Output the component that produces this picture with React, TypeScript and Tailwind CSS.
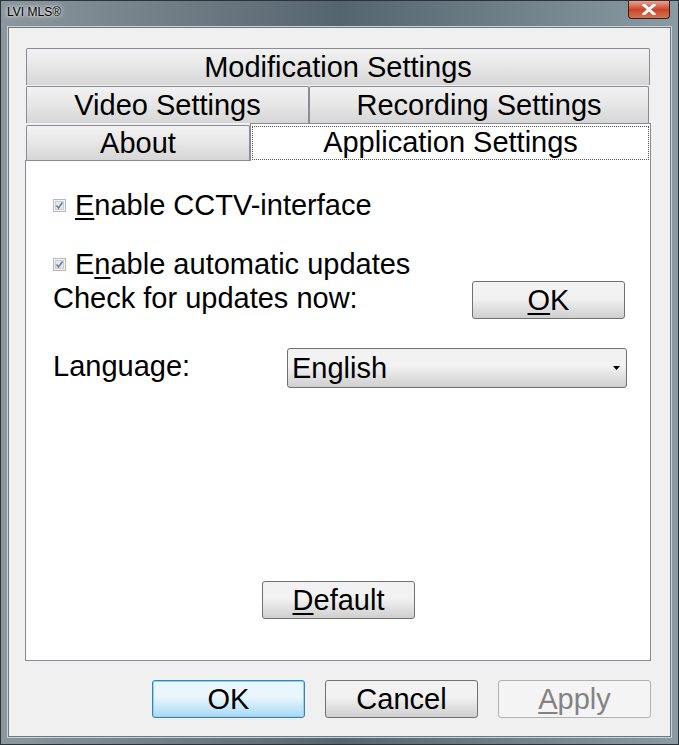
import React from 'react';

const font = { fontFamily: '"Liberation Sans", Arial, sans-serif' };

const Tab: React.FC<{ label: string; className: string }> = ({ label, className }) => (
  <div
    className={`flex items-center justify-center rounded-t-[2px] border border-b-0 border-[#898c95] bg-gradient-to-b from-[#f2f2f2] via-[#e6e6e6] to-[#d6d6d6] text-[29px] leading-none text-black ${className}`}
  >
    {label}
  </div>
);

const Check: React.FC = () => (
  <svg width="13" height="13" viewBox="0 0 13 13" className="shrink-0">
    <rect x="0.5" y="0.5" width="12" height="12" fill="#f4f4f4" stroke="#b5b8bc" />
    <rect x="2.5" y="2.5" width="8" height="8" fill="#e3e6ea" stroke="#c8ccd2" />
    <path d="M3.5 6.5 L5.5 9 L9.5 3.5" fill="none" stroke="#6d7f9b" strokeWidth="1.6" />
  </svg>
);

const Button: React.FC<{ children: React.ReactNode; variant?: 'normal' | 'default' | 'disabled'; className?: string }> = ({
  children,
  variant = 'normal',
  className = '',
}) => {
  const styles = {
    normal: 'border-[#707070] bg-gradient-to-b from-[#f2f2f2] from-45% to-[#cfcfcf] text-black',
    default: 'border-[#3c7fb1] bg-gradient-to-b from-[#eaf6fd] from-45% to-[#a7d9f5] text-black shadow-[inset_0_0_0_1px_#8ed4f5]',
    disabled: 'border-[#adb2b5] bg-[#f4f4f4] text-[#838383]',
  }[variant];
  return (
    <div
      className={`flex h-[38px] w-[153px] items-center justify-center rounded-[3px] border text-[29px] leading-none ${styles} ${className}`}
    >
      {children}
    </div>
  );
};

export default function App() {
  return (
    <div
      style={font}
      className="flex h-[745px] w-[679px] flex-col overflow-hidden border border-[#2c3338] bg-gradient-to-r from-[#8c979d] via-[#55656f] to-[#8a9ba3]"
    >
      {/* title bar */}
      <div className="flex h-[26px] shrink-0 items-start justify-between">
        <span className="ml-[6px] mt-[5px] text-[12px] leading-none text-black [text-shadow:0_0_6px_#ffffff,0_0_3px_#ffffff]">
          LVI MLS®
        </span>
        <div className="mr-[8px] flex h-[18px] w-[42px] items-center justify-center rounded-b-[4px] border border-t-0 border-[#4a1a14] bg-gradient-to-b from-[#e8a393] via-[#c8452c] to-[#d8724f]">
          <svg width="14" height="11" viewBox="0 0 14 11">
            <path d="M2 1 L12 10 M12 1 L2 10" stroke="#ffffff" strokeWidth="3" strokeLinecap="square" />
          </svg>
        </div>
      </div>

      {/* client area */}
      <div className="mx-[7px] mb-[7px] flex flex-1 flex-col border border-[#6d7880] bg-[#f0f0f0] shadow-[0_0_0_1px_#c7d3d9]">
        {/* tab control */}
        <div className="ml-[16px] mt-[20px] flex w-[626px] flex-col">
          <Tab label="Modification Settings" className="ml-[1px] h-[37px] w-[624px]" />
          <div className="mt-[1px] flex">
            <Tab label="Video Settings" className="ml-[1px] h-[37px] w-[283px]" />
            <Tab label="Recording Settings" className="h-[37px] w-[340px]" />
          </div>
          <div className="flex items-end">
            <Tab label="About" className="ml-[1px] h-[35px] w-[224px]" />
            <div className="relative z-10 -mb-[1px] flex h-[38px] w-[401px] items-center justify-center border border-b-0 border-[#898c95] bg-white text-[29px] leading-none">
              <div className="flex h-[34px] w-[397px] items-center justify-center border border-dotted border-[#555]">
                Application Settings
              </div>
            </div>
          </div>

          {/* panel */}
          <div className="flex h-[501px] flex-col border border-[#898c95] bg-white pl-[27px] pr-[23px] text-[29px] leading-none text-black">
            <div className="mt-[28px] flex h-[32px] items-center gap-[9px]">
              <Check />
              <span>
                <span className="underline underline-offset-[3px]">E</span>nable CCTV-interface
              </span>
            </div>
            <div className="mt-[27px] flex h-[32px] items-center gap-[9px]">
              <Check />
              <span>
                E<span className="underline underline-offset-[3px]">n</span>able automatic updates
              </span>
            </div>
            <div className="mt-[1px] flex items-center justify-between pr-[2px]">
              <span className="-mt-[4px]">Check for updates now:</span>
              <Button>
                <span>
                  <span className="underline underline-offset-[3px]">O</span>K
                </span>
              </Button>
            </div>
            <div className="mt-[29px] flex items-start justify-between">
              <span className="mt-[4px]">Language:</span>
              <div className="flex h-[40px] w-[340px] items-center justify-between rounded-[3px] border border-[#707070] bg-gradient-to-b from-[#f2f2f2] from-45% to-[#cfcfcf] pl-[4px] pr-[6px]">
                <span>English</span>
                <svg width="7" height="4" viewBox="0 0 7 4">
                  <path d="M0 0 H7 L3.5 4 Z" fill="#000" />
                </svg>
              </div>
            </div>
            <div className="flex-1" />
            <div className="mb-[41px] flex justify-center pr-[3px]">
              <Button>
                <span>
                  <span className="underline underline-offset-[3px]">D</span>efault
                </span>
              </Button>
            </div>
          </div>
        </div>

        {/* dialog buttons */}
        <div className="ml-[143px] mt-[19px] flex gap-[20px]">
          <Button variant="default">OK</Button>
          <Button>Cancel</Button>
          <Button variant="disabled">
            <span>
              <span className="underline underline-offset-[3px]">A</span>pply
            </span>
          </Button>
        </div>
      </div>
    </div>
  );
}
